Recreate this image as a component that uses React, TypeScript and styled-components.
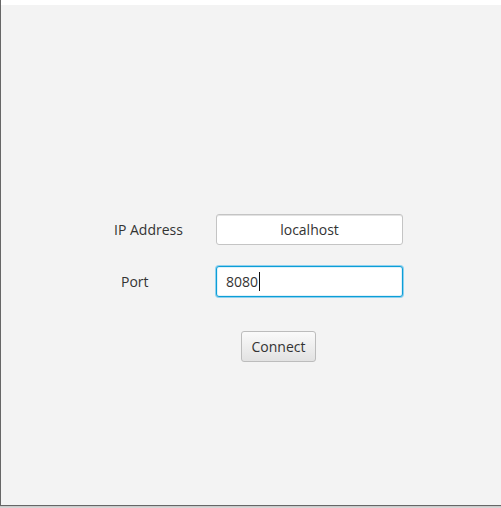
import React from "react";
import styled, { createGlobalStyle } from "styled-components";

const Global = createGlobalStyle`
  html, body { margin: 0; padding: 0; background: #ffffff; }
  body { font-family: "Open Sans", "Noto Sans", "Liberation Sans", sans-serif; }
  * { box-sizing: border-box; }
`;

const Screen = styled.div`
  width: 501px;
  height: 508px;
  display: flex;
  flex-direction: column;
  background: #ffffff;
`;

const Frame = styled.div`
  height: 506px;
  display: flex;
  flex-direction: column;
  padding-top: 5px;
  border-left: 1px solid #666666;
  border-bottom: 1px solid #666666;
  background: #ffffff;
`;

const Shadow = styled.div`
  height: 2px;
  background: linear-gradient(#c4c4c4, #dcdcdc);
`;

const Panel = styled.div`
  flex: 1;
  background: #f3f3f3;
  padding-top: 209px;
  padding-left: 113px;
`;

const Form = styled.div`
  display: grid;
  grid-template-columns: 102px 187px;
  grid-auto-rows: 31px;
  row-gap: 21px;
  align-items: center;
`;

const Label = styled.label<{ $indent?: number }>`
  font-size: 14px;
  color: #333333;
  padding-left: ${(p) => p.$indent ?? 0}px;
  line-height: 1;
`;

const Field = styled.input`
  width: 187px;
  height: 31px;
  margin: 0;
  font-family: inherit;
  font-size: 14px;
  color: #333333;
  text-align: center;
  padding: 0 9px;
  background: #ffffff;
  border-radius: 3px;
  outline: none;
  border: 1px solid #c4c4c4;
  box-shadow: inset 0 1px 0 #e2e2e2;
`;

const FocusedField = styled.div`
  width: 187px;
  height: 31px;
  display: flex;
  align-items: center;
  font-size: 14px;
  color: #333333;
  padding: 0 9px;
  background: #ffffff;
  border-radius: 3px;
  border: 1px solid #0c9ed6;
  box-shadow: 0 0 0 1px #8fd1ef, inset 0 0 0 1px #dff1fa;
`;

const Caret = styled.span`
  display: inline-block;
  width: 1px;
  height: 19px;
  margin-left: 1px;
  background: #111111;
`;

const ButtonRow = styled.div`
  padding-top: 34px;
  padding-left: 127px;
`;

const Button = styled.button`
  width: 75px;
  height: 31px;
  font-family: inherit;
  font-size: 14px;
  color: #333333;
  border: 1px solid #bcbcbc;
  border-radius: 3px;
  background: linear-gradient(#fafafa, #e2e2e2);
  padding: 0;
  cursor: default;
`;

export default function App() {
  return (
    <Screen>
      <Global />
      <Frame>
        <Panel>
          <Form>
            <Label>IP Address</Label>
            <Field defaultValue="localhost" readOnly />
            <Label $indent={7}>Port</Label>
            <FocusedField>
              <span>8080</span>
              <Caret />
            </FocusedField>
          </Form>
          <ButtonRow>
            <Button>Connect</Button>
          </ButtonRow>
        </Panel>
      </Frame>
      <Shadow />
    </Screen>
  );
}
